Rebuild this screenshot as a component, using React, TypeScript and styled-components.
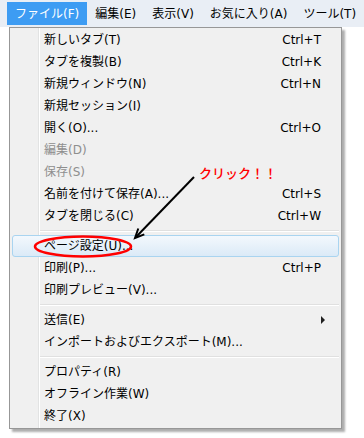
import React from "react";
import styled, { createGlobalStyle } from "styled-components";

const GlobalStyle = createGlobalStyle`
  html, body { margin: 0; padding: 0; background: #ffffff; }
  body {
    font-family: "DejaVu Sans", "Noto Sans CJK JP", sans-serif;
    font-size: 12px;
    color: #000000;
  }
`;

const Root = styled.div`
  position: relative;
  width: 364px;
  height: 438px;
  overflow: hidden;
  background: #ffffff;
`;

const MenuBar = styled.div`
  height: 27px;
  display: flex;
  align-items: center;
  padding-left: 2px;
  background: #e9eef5;
  box-sizing: border-box;
`;

const Grip = styled.div`
  width: 2px;
  height: 25px;
  margin-right: 5px;
  background: repeating-linear-gradient(
    to bottom,
    #9ea6b1 0px,
    #9ea6b1 1px,
    transparent 1px,
    transparent 3px
  );
`;

const BarItem = styled.div<{ $active?: boolean }>`
  height: 23px;
  display: flex;
  align-items: center;
  padding: 0 8px;
  line-height: 1;
  white-space: nowrap;
  color: ${(p) => (p.$active ? "#ffffff" : "#000000")};
  background: ${(p) => (p.$active ? "#3d9cf3" : "transparent")};
`;

const Menu = styled.div`
  width: 333px;
  margin-left: 9px;
  box-sizing: border-box;
  border: 1px solid #979797;
  padding: 1px 2px 1px 2px;
  background: linear-gradient(
    to right,
    #f0f0f0 0px,
    #f0f0f0 28px,
    #e2e3e3 28px,
    #e2e3e3 29px,
    #ffffff 29px,
    #ffffff 30px,
    #f0f0f0 30px
  );
  box-shadow: 3px 3px 2px rgba(0, 0, 0, 0.32);
  display: flex;
  flex-direction: column;
`;

const Row = styled.div<{ $hot?: boolean; $disabled?: boolean }>`
  height: 22px;
  box-sizing: border-box;
  display: grid;
  grid-template-columns: 1fr auto;
  align-items: center;
  padding: 0 17px 0 31px;
  line-height: 1;
  white-space: nowrap;
  border: 1px solid ${(p) => (p.$hot ? "#a9d4f0" : "transparent")};
  border-radius: 3px;
  background: ${(p) =>
    p.$hot ? "linear-gradient(to bottom, #f3f8fd, #dbeaf7)" : "transparent"};
  color: ${(p) => (p.$disabled ? "#8e8e8e" : "#000000")};
`;

const Shortcut = styled.span`
  text-align: right;
`;

const SubArrow = styled.span`
  width: 0;
  height: 0;
  margin-right: -6px;
  border-left: 4px solid #202020;
  border-top: 4px solid transparent;
  border-bottom: 4px solid transparent;
`;

const Separator = styled.div`
  height: 8px;
  display: flex;
  flex-direction: column;
  justify-content: center;
  padding-left: 28px;
  &::before {
    content: "";
    display: block;
    height: 1px;
    background: #e0e0e0;
  }
  &::after {
    content: "";
    display: block;
    height: 1px;
    background: #ffffff;
  }
`;

const Overlay = styled.svg`
  position: absolute;
  left: 0;
  top: 0;
  pointer-events: none;
`;

const Callout = styled.span`
  position: absolute;
  left: 199px;
  top: 166px;
  color: #ff0000;
  font-family: "Noto Sans CJK JP", sans-serif;
  font-size: 13px;
  font-weight: 500;
  line-height: 1;
  white-space: nowrap;
`;

type Entry =
  | {
      kind: "item";
      label: string;
      shortcut?: string;
      disabled?: boolean;
      hot?: boolean;
      sub?: boolean;
    }
  | { kind: "sep" };

const entries: Entry[] = [
  { kind: "item", label: "新しいタブ(T)", shortcut: "Ctrl+T" },
  { kind: "item", label: "タブを複製(B)", shortcut: "Ctrl+K" },
  { kind: "item", label: "新規ウィンドウ(N)", shortcut: "Ctrl+N" },
  { kind: "item", label: "新規セッション(I)" },
  { kind: "item", label: "開く(O)...", shortcut: "Ctrl+O" },
  { kind: "item", label: "編集(D)", disabled: true },
  { kind: "item", label: "保存(S)", disabled: true },
  { kind: "item", label: "名前を付けて保存(A)...", shortcut: "Ctrl+S" },
  { kind: "item", label: "タブを閉じる(C)", shortcut: "Ctrl+W" },
  { kind: "sep" },
  { kind: "item", label: "ページ設定(U)...", hot: true },
  { kind: "item", label: "印刷(P)...", shortcut: "Ctrl+P" },
  { kind: "item", label: "印刷プレビュー(V)..." },
  { kind: "sep" },
  { kind: "item", label: "送信(E)", sub: true },
  { kind: "item", label: "インポートおよびエクスポート(M)..." },
  { kind: "sep" },
  { kind: "item", label: "プロパティ(R)" },
  { kind: "item", label: "オフライン作業(W)" },
  { kind: "item", label: "終了(X)" },
];

const barItems = ["ファイル(F)", "編集(E)", "表示(V)", "お気に入り(A)", "ツール(T)"];

export default function App() {
  return (
    <Root>
      <GlobalStyle />
      <MenuBar>
        <Grip />
        {barItems.map((t, i) => (
          <BarItem key={t} $active={i === 0}>
            {t}
          </BarItem>
        ))}
      </MenuBar>
      <Menu>
        {entries.map((e, i) =>
          e.kind === "sep" ? (
            <Separator key={i} />
          ) : (
            <Row key={i} $hot={e.hot} $disabled={e.disabled}>
              <span>{e.label}</span>
              {e.sub ? <SubArrow /> : <Shortcut>{e.shortcut ?? ""}</Shortcut>}
            </Row>
          )
        )}
      </Menu>
      <Overlay width="364" height="438" viewBox="0 0 364 438">
        <ellipse cx="83" cy="246.5" rx="48" ry="10" fill="none" stroke="#ff0000" strokeWidth="2.5" />
        <line x1="194" y1="177" x2="136" y2="237" stroke="#000" strokeWidth="2" />
        <polyline points="144.3,234.4 135,238 138.3,228.5" fill="none" stroke="#000" strokeWidth="2" strokeLinejoin="miter" />
      </Overlay>
      <Callout>クリック！！</Callout>
    </Root>
  );
}
